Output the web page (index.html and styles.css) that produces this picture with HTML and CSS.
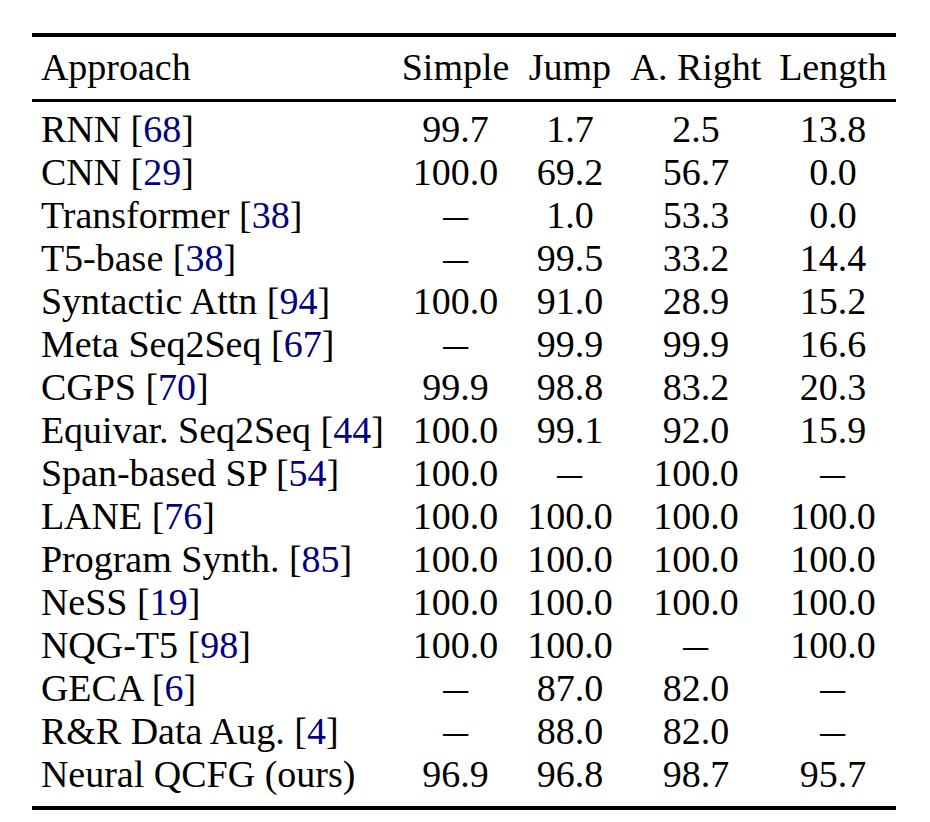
FILE: index.html
```html
<!DOCTYPE html>
<html>
<head>
<meta charset="utf-8">
<link rel="stylesheet" href="styles.css">
</head>
<body>
<table class="results">
  <thead>
    <tr>
      <th class="name">Approach</th>
      <th>Simple</th>
      <th>Jump</th>
      <th>A. Right</th>
      <th>Length</th>
    </tr>
  </thead>
  <tbody>
    <tr><td class="name">RNN [<span class="cite">68</span>]</td><td>99.7</td><td>1.7</td><td>2.5</td><td>13.8</td></tr>
    <tr><td class="name">CNN [<span class="cite">29</span>]</td><td>100.0</td><td>69.2</td><td>56.7</td><td>0.0</td></tr>
    <tr><td class="name">Transformer [<span class="cite">38</span>]</td><td><span class="dash">–</span></td><td>1.0</td><td>53.3</td><td>0.0</td></tr>
    <tr><td class="name">T5-base [<span class="cite">38</span>]</td><td><span class="dash">–</span></td><td>99.5</td><td>33.2</td><td>14.4</td></tr>
    <tr><td class="name">Syntactic Attn [<span class="cite">94</span>]</td><td>100.0</td><td>91.0</td><td>28.9</td><td>15.2</td></tr>
    <tr><td class="name">Meta Seq2Seq [<span class="cite">67</span>]</td><td><span class="dash">–</span></td><td>99.9</td><td>99.9</td><td>16.6</td></tr>
    <tr><td class="name">CGPS [<span class="cite">70</span>]</td><td>99.9</td><td>98.8</td><td>83.2</td><td>20.3</td></tr>
    <tr><td class="name">Equivar. Seq2Seq [<span class="cite">44</span>]</td><td>100.0</td><td>99.1</td><td>92.0</td><td>15.9</td></tr>
    <tr><td class="name">Span-based SP [<span class="cite">54</span>]</td><td>100.0</td><td><span class="dash">–</span></td><td>100.0</td><td><span class="dash">–</span></td></tr>
    <tr><td class="name">LANE [<span class="cite">76</span>]</td><td>100.0</td><td>100.0</td><td>100.0</td><td>100.0</td></tr>
    <tr><td class="name">Program Synth. [<span class="cite">85</span>]</td><td>100.0</td><td>100.0</td><td>100.0</td><td>100.0</td></tr>
    <tr><td class="name">NeSS [<span class="cite">19</span>]</td><td>100.0</td><td>100.0</td><td>100.0</td><td>100.0</td></tr>
    <tr><td class="name">NQG-T5 [<span class="cite">98</span>]</td><td>100.0</td><td>100.0</td><td><span class="dash">–</span></td><td>100.0</td></tr>
    <tr><td class="name">GECA [<span class="cite">6</span>]</td><td><span class="dash">–</span></td><td>87.0</td><td>82.0</td><td><span class="dash">–</span></td></tr>
    <tr><td class="name">R&amp;R Data Aug. [<span class="cite">4</span>]</td><td><span class="dash">–</span></td><td>88.0</td><td>82.0</td><td><span class="dash">–</span></td></tr>
    <tr><td class="name">Neural QCFG (ours)</td><td>96.9</td><td>96.8</td><td>98.7</td><td>95.7</td></tr>
  </tbody>
</table>
</body>
</html>
```

FILE: styles.css
```css
html, body {
  margin: 0;
  padding: 0;
  background: #ffffff;
}

body {
  font-family: "Liberation Serif", "Times New Roman", serif;
  color: #000000;
}

.results {
  margin: 33px 0 0 32px;
  border-collapse: separate;
  border-spacing: 0;
  font-size: 38px;
  line-height: 43px;
}

.results th,
.results td {
  padding: 0 8.9px;
  text-align: center;
  font-weight: normal;
  white-space: nowrap;
  vertical-align: baseline;
}

.results .name {
  text-align: left;
}

.results thead th {
  border-top: 4px solid #000000;
  border-bottom: 3px solid #000000;
  padding-top: 9px;
  padding-bottom: 10px;
}

.results tbody tr:first-child td {
  padding-top: 6px;
}

.results tbody tr:last-child td {
  padding-bottom: 10px;
  border-bottom: 4px solid #000000;
}

.cite {
  color: #000080;
}

.dash {
  display: inline-block;
  transform: scaleX(1.3);
}
```
